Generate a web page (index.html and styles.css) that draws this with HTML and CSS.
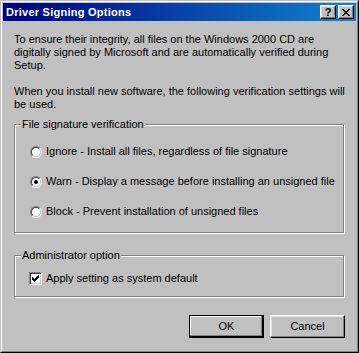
FILE: index.html
```html
<!DOCTYPE html>
<html>
<head>
<meta charset="utf-8">
<link rel="stylesheet" href="styles.css">
</head>
<body>
<div class="window">
  <div class="frame">
    <div class="titlebar">
      <span class="title">Driver Signing Options</span>
      <div class="tbtns">
        <div class="tbtn help">?</div>
        <div class="tbtn">
          <svg width="8" height="7" viewBox="0 0 8 7" shape-rendering="crispEdges">
            <rect x="0" y="0" width="2" height="1"/><rect x="6" y="0" width="2" height="1"/>
            <rect x="1" y="1" width="2" height="1"/><rect x="5" y="1" width="2" height="1"/>
            <rect x="2" y="2" width="4" height="1"/>
            <rect x="3" y="3" width="2" height="1"/>
            <rect x="2" y="4" width="4" height="1"/>
            <rect x="1" y="5" width="2" height="1"/><rect x="5" y="5" width="2" height="1"/>
            <rect x="0" y="6" width="2" height="1"/><rect x="6" y="6" width="2" height="1"/>
          </svg>
        </div>
      </div>
    </div>
    <div class="body">
      <p class="para">To ensure their integrity, all files on the Windows 2000 CD are<br>digitally signed by Microsoft and are automatically verified during<br>Setup.</p>
      <p class="para">When you install new software, the following verification settings will<br>be used.</p>

      <div class="group group-sig">
        <span class="legend">File signature verification</span>
        <div class="option">
          <span class="radio"><span class="ring"></span></span>
          <span class="label">Ignore - Install all files, regardless of file signature</span>
        </div>
        <div class="option">
          <span class="radio"><span class="ring"><span class="dot"></span></span></span>
          <span class="label">Warn - Display a message before installing an unsigned file</span>
        </div>
        <div class="option">
          <span class="radio"><span class="ring"></span></span>
          <span class="label">Block - Prevent installation of unsigned files</span>
        </div>
      </div>

      <div class="group group-admin">
        <span class="legend">Administrator option</span>
        <div class="option check-option">
          <span class="checkbox">
            <svg width="11" height="11" viewBox="0 0 11 11" shape-rendering="crispEdges">
              <rect x="2" y="4" width="1" height="3"/>
              <rect x="3" y="5" width="1" height="3"/>
              <rect x="4" y="6" width="1" height="3"/>
              <rect x="5" y="5" width="1" height="3"/>
              <rect x="6" y="4" width="1" height="3"/>
              <rect x="7" y="3" width="1" height="3"/>
              <rect x="8" y="2" width="1" height="3"/>
            </svg>
          </span>
          <span class="label">Apply setting as system default</span>
        </div>
      </div>

      <div class="buttons">
        <button class="btn default">OK</button>
        <button class="btn">Cancel</button>
      </div>
    </div>
  </div>
</div>
</body>
</html>
```
FILE: styles.css
```css
* { box-sizing: border-box; }

body {
  margin: 0;
  background: #c0c0c0;
  font-family: "Liberation Sans", Arial, sans-serif;
  font-size: 11px;
  line-height: 13px;
  color: #000;
}

.window {
  width: 359px;
  height: 353px;
  border: 1px solid;
  border-color: #c0c0c0 #000 #000 #c0c0c0;
  background: #c0c0c0;
}

.frame {
  height: 100%;
  border: 1px solid;
  border-color: #fff #808080 #808080 #fff;
  padding: 1px;
  display: flex;
  flex-direction: column;
}

.titlebar {
  height: 18px;
  flex: none;
  background: linear-gradient(to right, #000080, #1084d0);
  display: flex;
  align-items: center;
  padding: 0 2px 0 3px;
}

.title {
  flex: 1;
  color: #fff;
  font-weight: bold;
  letter-spacing: 0.25px;
  white-space: nowrap;
}

.tbtns {
  display: flex;
  gap: 2px;
}

.tbtn {
  width: 16px;
  height: 14px;
  background: #c0c0c0;
  border: 1px solid;
  border-color: #fff #000 #000 #fff;
  box-shadow: inset -1px -1px #808080, inset 1px 1px #dfdfdf;
  display: flex;
  align-items: center;
  justify-content: center;
}

.tbtn.help {
  font-weight: bold;
  font-size: 11px;
  line-height: 12px;
  padding-bottom: 1px;
}

.body {
  flex: 1;
  padding: 12px 12px 0 11px;
  display: flex;
  flex-direction: column;
}

.para {
  margin: 0 0 13px;
  white-space: nowrap;
}

.group {
  position: relative;
  border: 1px solid #808080;
  box-shadow: inset 1px 1px #fff, 1px 1px #fff;
}

.group-sig {
  padding: 20px 0 14px 15px;
  display: flex;
  flex-direction: column;
  gap: 17px;
}

.group-admin {
  margin-top: 22px;
  padding: 16px 0 11px 14px;
}

.legend {
  position: absolute;
  top: -7px;
  left: 6px;
  padding: 0 1px;
  background: #c0c0c0;
  white-space: nowrap;
}

.option {
  height: 13px;
  display: flex;
  align-items: center;
  gap: 4px;
  white-space: nowrap;
}

.radio {
  width: 12px;
  height: 12px;
  flex: none;
  border-radius: 50%;
  border: 1px solid;
  border-color: #808080 #fff #fff #808080;
}

.ring {
  width: 100%;
  height: 100%;
  border-radius: 50%;
  border: 1px solid;
  border-color: #404040 #c0c0c0 #c0c0c0 #404040;
  background: #fff;
  display: flex;
  align-items: center;
  justify-content: center;
}

.dot {
  width: 4px;
  height: 4px;
  border-radius: 50%;
  background: #000;
}

.checkbox {
  width: 13px;
  height: 13px;
  flex: none;
  border: 1px solid;
  border-color: #808080 #fff #fff #808080;
  box-shadow: inset 1px 1px #404040, inset -1px -1px #c0c0c0;
  background: #fff;
  display: flex;
}

.checkbox svg { display: block; }

.buttons {
  margin-top: 18px;
  margin-right: -1px;
  display: flex;
  justify-content: flex-end;
  gap: 6px;
}

.btn {
  width: 75px;
  height: 23px;
  padding: 0;
  margin: 0;
  font: inherit;
  color: #000;
  background: #c0c0c0;
  border: 1px solid;
  border-color: #fff #000 #000 #fff;
  box-shadow: inset -1px -1px #808080, inset 1px 1px #dfdfdf;
  display: flex;
  align-items: center;
  justify-content: center;
}

.btn.default {
  border-color: #000;
  box-shadow: inset -1px -1px #000, inset -2px -2px #808080, inset 1px 1px #fff;
}
```
